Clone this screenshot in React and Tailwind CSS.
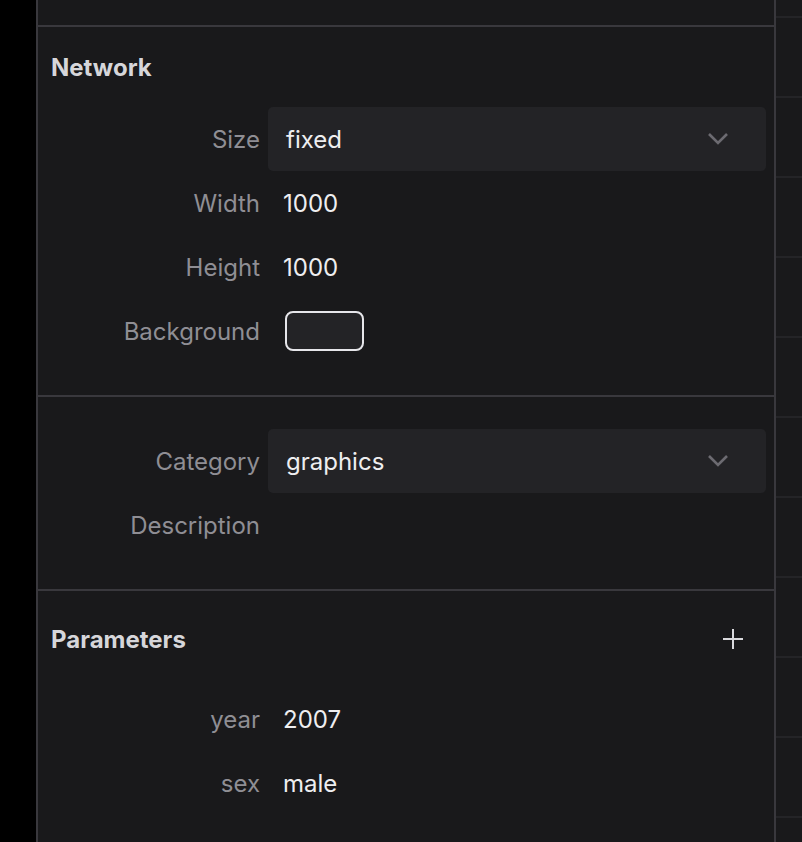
import React from 'react'

const Chevron = () => (
  <svg width="24" height="16" viewBox="0 0 24 16" fill="none" className="shrink-0">
    <polyline points="3,3 12,12 21,3" stroke="#6c6b71" strokeWidth="2.6" strokeLinecap="butt" strokeLinejoin="miter" />
  </svg>
)

const Plus = () => (
  <svg width="22" height="22" viewBox="0 0 22 22" fill="none">
    <path d="M11 1v20M1 11h20" stroke="#d9d9dd" strokeWidth="2" />
  </svg>
)

const Label = ({ children }) => (
  <div className="w-[222px] shrink-0 pt-[2px] text-right text-[#8f8e94]">{children}</div>
)

const SelectRow = ({ label, value }) => (
  <div className="flex items-center h-16">
    <Label>{label}</Label>
    <div className="ml-2 mr-2 flex-1 h-16 rounded-[5px] bg-[#232326] flex items-center justify-between pl-[18px] pr-[36px]">
      <span className="pt-[2px] text-[#eeeef0]">{value}</span>
      <Chevron />
    </div>
  </div>
)

const ValueRow = ({ label, children }) => (
  <div className="flex items-center h-16">
    <Label>{label}</Label>
    <div className="ml-[23px] pt-[2px] text-[#eeeef0]">{children}</div>
  </div>
)

const Divider = () => <div className="h-[2px] bg-[#39383d]" />

export default function App() {
  return (
    <div
      className="flex w-[802px] h-[842px] overflow-hidden bg-black text-[24px] leading-none"
      style={{ fontFamily: 'Inter, "Noto Sans", sans-serif' }}
    >
      <div className="w-[36px] shrink-0 bg-black" />
      <div className="w-[2px] shrink-0 bg-[#39383d]" />

      {/* Inspector panel */}
      <div className="w-[736px] shrink-0 bg-[#19191b] flex flex-col">
        <div className="h-[25px]" />
        <Divider />

        {/* Network */}
        <div className="pt-2 pb-8">
          <div className="h-16 flex items-center pl-[13px] font-bold text-[#d6d6da]">
            <span className="pt-[2px]">Network</span>
          </div>
          <div className="mt-2">
            <SelectRow label="Size" value="fixed" />
            <ValueRow label="Width">1000</ValueRow>
            <ValueRow label="Height">1000</ValueRow>
            <div className="flex items-center h-16">
              <Label>Background</Label>
              <div className="ml-[25px] w-[79px] h-[40px] rounded-[8px] border-2 border-[#e6e6ea] bg-[#232326]" />
            </div>
          </div>
        </div>
        <Divider />

        {/* Meta */}
        <div className="pt-8 pb-8">
          <SelectRow label="Category" value="graphics" />
          <ValueRow label="Description"></ValueRow>
        </div>
        <Divider />

        {/* Parameters */}
        <div className="pt-2">
          <div className="h-20 flex items-center justify-between pl-[13px] pr-[30px] font-bold text-[#d6d6da]">
            <span className="pt-[2px]">Parameters</span>
            <Plus />
          </div>
          <div className="mt-2">
            <ValueRow label="year">2007</ValueRow>
            <ValueRow label="sex">male</ValueRow>
          </div>
        </div>
      </div>

      <div className="w-[2px] shrink-0 bg-[#39383d]" />

      {/* Table edge */}
      <div className="flex-1 bg-[#19191b] flex flex-col">
        <div className="h-4 shrink-0" />
        {Array.from({ length: 11 }).map((_, i) => (
          <div key={i} className="h-20 shrink-0 border-t-2 border-[#242427]" />
        ))}
      </div>
    </div>
  )
}
